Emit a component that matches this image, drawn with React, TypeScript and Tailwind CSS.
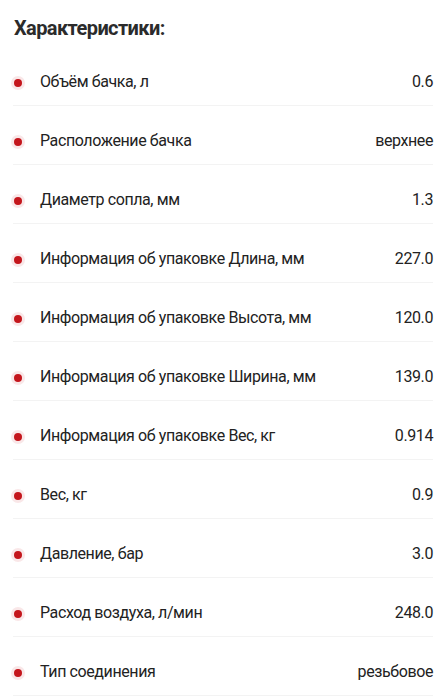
const specs: [string, string][] = [
  ['Объём бачка, л', '0.6'],
  ['Расположение бачка', 'верхнее'],
  ['Диаметр сопла, мм', '1.3'],
  ['Информация об упаковке Длина, мм', '227.0'],
  ['Информация об упаковке Высота, мм', '120.0'],
  ['Информация об упаковке Ширина, мм', '139.0'],
  ['Информация об упаковке Вес, кг', '0.914'],
  ['Вес, кг', '0.9'],
  ['Давление, бар', '3.0'],
  ['Расход воздуха, л/мин', '248.0'],
  ['Тип соединения', 'резьбовое'],
];

const App = () => {
  return (
    <div
      className="bg-white min-h-[700px] pl-[13px] pr-[14px] pt-[14px] text-[#222]"
      style={{ fontFamily: 'Roboto, "Noto Sans", sans-serif' }}
    >
      <h2 className="text-[20px] leading-[28px] font-bold tracking-[-0.6px] text-[#2b2b2b] pl-px">Характеристики:</h2>
      <ul className="mt-[5px]">
        {specs.map(([name, value]) => (
          <li
            key={name}
            className="flex items-center justify-between pt-[23px] pb-[11px] border-b border-[#f3f3f3] text-[16px] leading-[24px] tracking-[-0.4px]"
          >
            <div className="flex items-center">
              <span className="ml-[1px] mt-[1px] w-[8px] h-[8px] rounded-full bg-[#c4161c] shadow-[0_0_0_3px_rgba(196,22,28,0.1)]" />
              <span className="ml-[18px]">{name}</span>
            </div>
            <span>{value}</span>
          </li>
        ))}
      </ul>
    </div>
  );
};

export default App;
